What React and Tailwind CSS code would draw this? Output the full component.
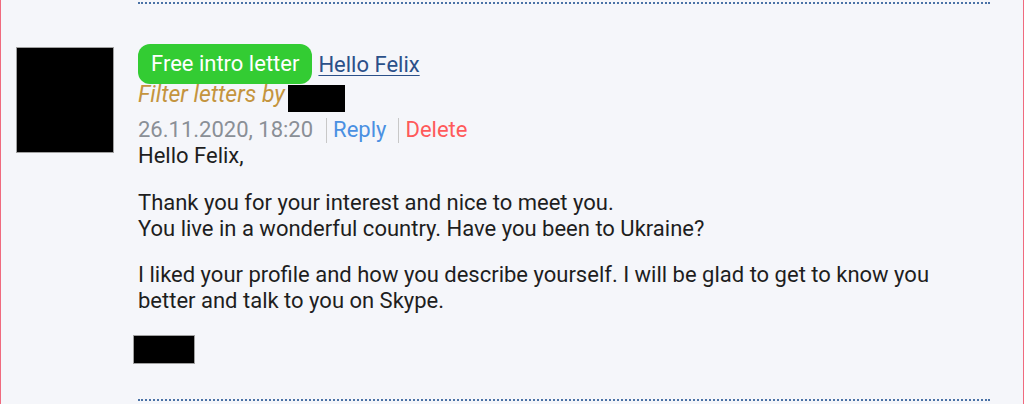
export default function App() {
  return (
    <div
      className="h-[404px] w-[1024px] overflow-hidden border-l border-r border-[#f06a7e] bg-[#f5f6fa] text-[#1e1e1e]"
      style={{ fontFamily: "Roboto, 'Liberation Sans', sans-serif" }}
    >
      <div className="ml-[137px] mr-[33px] mt-[2px] border-t-2 border-dotted border-[#4a72a6]" />

      {/* letter */}
      <div className="flex gap-[24px] pl-[15px] pt-[40px] pr-[33px]">
        <div className="mt-[3px] h-[106px] w-[98px] shrink-0 border border-[#a0a0a0] bg-black" />

        <div className="min-w-0 flex-1 text-[22px]">
          <div className="flex items-center gap-[6px]">
            <span className="flex h-[40px] items-center rounded-[12px] bg-[#33cc33] px-[13px] leading-[26px] text-white">
              Free intro letter
            </span>
            <a href="#" className="mt-[1px] leading-[26px] text-[#2b5089] underline decoration-1 underline-offset-[3px]">
              Hello Felix
            </a>
          </div>

          <div className="mt-[-2px] flex items-start">
            <span className="text-[23px] leading-[26px] italic text-[#c4943e]">Filter letters by</span>
            <span className="ml-[3px] mt-[3px] h-[27px] w-[57px] bg-black" />
          </div>

          <div className="mt-[5px] flex items-center leading-[26px]">
            <span className="text-[#8a8f96]">26.11.2020, 18:20</span>
            <span className="ml-[13px] mr-[6px] h-[25px] w-px bg-[#c8c8c8]" />
            <a href="#" className="text-[#4a90e2]">Reply</a>
            <span className="ml-[12px] mr-[6px] h-[25px] w-px bg-[#c8c8c8]" />
            <a href="#" className="text-[#ff5a5a]">Delete</a>
          </div>

          <div className="leading-[26.5px]">
            <p>Hello Felix,</p>
            <p className="mt-[20px]">
              Thank you for your interest and nice to meet you.
              <br />
              You live in a wonderful country. Have you been to Ukraine?
            </p>
            <p className="mt-[19px]">
              I liked your profile and how you describe yourself. I will be glad to get to know you better and
              talk to you on Skype.
            </p>
          </div>

          <div className="ml-[-5px] mt-[20px] h-[29px] w-[62px] border border-[#a0a0a0] bg-black" />

          <div className="mt-[35px] border-t-2 border-dotted border-[#4a72a6]" />
        </div>
      </div>
    </div>
  );
}
